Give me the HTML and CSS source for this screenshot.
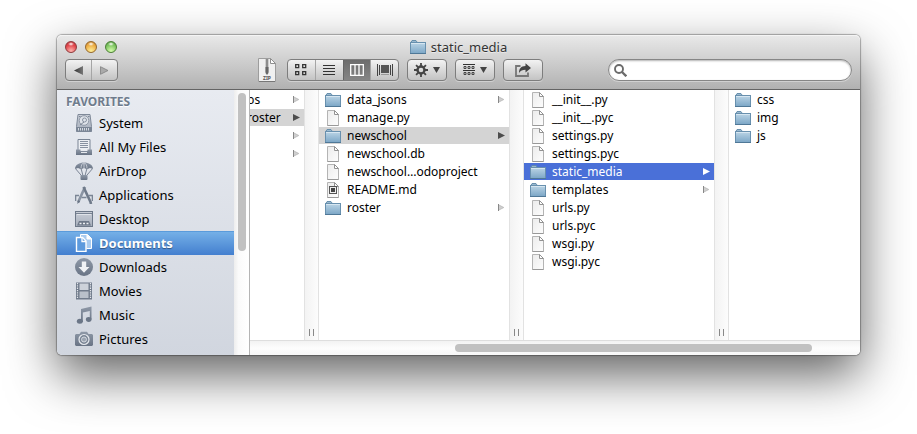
FILE: index.html
```html
<!DOCTYPE html>
<html lang="en">
<head>
<meta charset="utf-8">
<title>static_media</title>
<link rel="stylesheet" href="styles.css">
</head>
<body>
<svg class="sprite" aria-hidden="true">
  <defs>
    <linearGradient id="g-folder" x1="0" y1="0" x2="0" y2="1"><stop offset="0" stop-color="#bcd5e6"/><stop offset="1" stop-color="#7ba6c6"/></linearGradient>
    <linearGradient id="g-page" x1="0" y1="0" x2="1" y2="1"><stop offset="0" stop-color="#ececec"/><stop offset="1" stop-color="#fdfdfd"/></linearGradient>
    <linearGradient id="g-side" x1="0" y1="0" x2="0" y2="1"><stop offset="0" stop-color="#8e98a7"/><stop offset="1" stop-color="#697485"/></linearGradient>
    <linearGradient id="g-pale" x1="0" y1="0" x2="0" y2="1"><stop offset="0" stop-color="#c9ced7"/><stop offset="1" stop-color="#a6aebb"/></linearGradient>
    <linearGradient id="g-back" x1="0" y1="0" x2="1" y2="0"><stop offset="0" stop-color="#333"/><stop offset="1" stop-color="#777"/></linearGradient>
    <symbol id="folder" viewBox="0 0 16 14">
      <path d="M1.5 3V1.2L2 .6h4l.6.6V3" fill="#9fbdd3" stroke="#5f89a8" stroke-width="1"/>
      <rect x=".5" y="2.5" width="15" height="11" fill="url(#g-folder)" stroke="#6890ae"/>
      <path d="M1 3.5h14" stroke="#d6e6f1"/><path d="M0 13.5h16" stroke="#4f7897"/>
    </symbol>
    <symbol id="page" viewBox="0 0 12 16">
      <path d="M.5.5h7l4 4v11H.5z" fill="url(#g-page)" stroke="#b4b4b4"/>
      <path d="M7.5.5v4h4z" fill="#fff" stroke="#929292"/><path d="M.5 15.5h11" stroke="#999"/>
    </symbol>
    <symbol id="page-md" viewBox="0 0 12 16">
      <path d="M.5.5h7l4 4v11H.5z" fill="url(#g-page)" stroke="#b4b4b4"/>
      <path d="M7.5.5v4h4z" fill="#fff" stroke="#929292"/><path d="M.5 15.5h11" stroke="#999"/>
      <rect x="2.5" y="4.5" width="7" height="7" fill="#eee" stroke="#555"/><rect x="4" y="6" width="4" height="4" fill="#444"/>
    </symbol>
    <symbol id="arrow" viewBox="0 0 7 7"><path d="M0 0v7l7-3.500z" fill="currentColor"/></symbol>
    <symbol id="arrow-soft" viewBox="0 0 7 7"><path d="M.5.8v5.400L5.800 3.500z" fill="#d0d0d0" stroke="#b8b8b8" stroke-width=".8"/><path d="M.5 0v7" stroke="#888"/></symbol>

    <symbol id="system" viewBox="0 0 18 18">
      <path d="M3 .5h12l1.500 12v5h-15v-5z" fill="url(#g-pale)" stroke="#7f8998"/>
      <rect x="1.500" y="13" width="15" height="4.500" fill="#7a8595"/>
      <circle cx="9" cy="6.500" r="4.800" fill="#dfe3e9" stroke="#8f98a6"/><circle cx="9.500" cy="6" r="2" fill="none" stroke="#8a94a3"/>
      <path d="M5 11l4-3M4 2.500h1.500M13 2.500h1.500" stroke="#7d8796"/>
      <path d="M3.500 14v2.500M5.500 14v2.500M7.500 14v2.500M9.500 14v2.500M11.500 14v2.500M13.500 14v2.500" stroke="#d4d9e0"/>
    </symbol>
    <symbol id="files" viewBox="0 0 18 18">
      <path d="M3 12.500V1.500h12v11" fill="#eceff3" stroke="#7a8595"/>
      <path d="M5 3.500h8M5 5.500h8M5 7.500h8M5 9.500h8" stroke="#8791a0"/>
      <path d="M1 11.500h4.500v1.500h7v-1.500H17V17H1z" fill="url(#g-side)"/><path d="M6 14.500h6" stroke="#e5e8ed"/>
    </symbol>
    <symbol id="airdrop" viewBox="0 0 18 18">
      <path d="M0 7C0-1.800 18-1.800 18 7L15 6l-3 1.200L9 6 6 7.200 3 6z" fill="url(#g-side)"/>
      <path d="M6 6.500C6 3 7.500.8 9 .8S12 3 12 6.500M9 1v5.500" fill="none" stroke="#c9ced7" stroke-width=".9"/>
      <path d="M.8 7l6 7M6.200 7l1.600 6M11.800 7l-1.600 6M17.200 7l-6 7" stroke="#7b8595" stroke-width="1" fill="none"/>
      <rect x="5.500" y="13" width="7" height="5" rx="1" fill="url(#g-side)"/>
    </symbol>
    <symbol id="apps" viewBox="0 0 18 18">
      <path d="M10 1L3 16.500" stroke="#8a94a3" stroke-width="2.600"/><path d="M3.200 14l-1 4 3-2.500z" fill="#697485"/>
      <path d="M8.500 1l7 15 .5 2" fill="none" stroke="#6f7a8a" stroke-width="2.600"/>
      <path d="M.5 15V9.500H4M6.500 11.500h5M14 9.500h3.500V15" fill="none" stroke="#7a8595" stroke-width="1.600"/>
    </symbol>
    <symbol id="desktop" viewBox="0 0 18 18">
      <rect x=".5" y="1.500" width="17" height="15" fill="url(#g-pale)" stroke="#6e7989"/>
      <path d="M1 3.500h16" stroke="#788393"/><path d="M2 4.500h14" stroke="#dfe3e9"/>
      <path d="M4 11h10l2 4.500H2z" fill="#6e7989"/><path d="M4.500 13.500h2M8 13.500h2M11.500 13.500h2" stroke="#edf0f3" stroke-width="1.500"/>
    </symbol>
    <symbol id="documents" viewBox="0 0 18 18">
      <path d="M5.500 3.500v-3h7l4 4v10h-5" fill="#a9cbef" stroke="#fff"/><path d="M12 .5v4.500h4.500" fill="#fff" stroke="#fff"/>
      <path d="M1.500 3.500h6l3.500 3.500v10.500H1.500z" fill="#5d9add" stroke="#fff" stroke-width="1.400"/><path d="M7 3.500v4h4" fill="none" stroke="#fff" stroke-width="1.300"/>
    </symbol>
    <symbol id="downloads" viewBox="0 0 18 18">
      <circle cx="9" cy="9" r="9" fill="url(#g-side)"/><path d="M6.800 3.500h4.400V9h3.300L9 14.800 3.500 9h3.300z" fill="#f0f2f5"/>
    </symbol>
    <symbol id="movies" viewBox="0 0 18 18">
      <rect x="1" y=".5" width="16" height="17" fill="#707b8b"/><path d="M2.500 1v16M15.500 1v16" stroke="#e5e8ed" stroke-width="1.200" stroke-dasharray="1.300 1"/>
      <rect x="4.500" y="1.500" width="9" height="6.500" fill="#cdd2da"/><rect x="4.500" y="9.500" width="9" height="6.500" fill="#b9c0ca"/>
    </symbol>
    <symbol id="music" viewBox="0 0 18 18">
      <path d="M6 3L16.500.5V13.500H14.800V5L7.800 6.500V16H6z" fill="url(#g-side)"/>
      <ellipse cx="4.800" cy="15.200" rx="3" ry="2.500" fill="#6b7687"/><ellipse cx="13.700" cy="13.500" rx="2.800" ry="2.400" fill="#6b7687"/>
    </symbol>
    <symbol id="pictures" viewBox="0 0 18 18">
      <path d="M1 4h3.500L6 1.800h6L13.500 4H17l1 1v10l-1 1H1l-1-1V5z" fill="url(#g-side)"/>
      <circle cx="9" cy="9.500" r="5" fill="#7a8595" stroke="#e6e9ee" stroke-width="1.200"/><circle cx="9" cy="9.500" r="2.500" fill="#9aa3b0" stroke="#d4d9e0"/>
    </symbol>
  </defs>
</svg>

<main class="window">
  <header class="chrome">
    <div class="titlebar">
      <div class="lights">
        <button class="light light-close" aria-label="Close"></button>
        <button class="light light-min" aria-label="Minimize"></button>
        <button class="light light-zoom" aria-label="Zoom"></button>
      </div>
      <h1 class="title"><svg class="folder-icon"><use href="#folder"/></svg>static_media</h1>
    </div>
    <div class="toolbar">
      <div class="group nav">
        <button class="seg" aria-label="Back"><svg width="9" height="9" viewBox="0 0 9 9"><path d="M9 0v9L0 4.500z" fill="url(#g-back)"/></svg></button>
        <button class="seg" aria-label="Forward"><svg width="9" height="9" viewBox="0 0 9 9"><path d="M.5.7v7.600L8 4.500z" fill="#aaa" stroke="#808080" stroke-width=".8"/></svg></button>
      </div>
      <div class="tools">
        <button class="zip" aria-label="Zip archive">
          <svg width="20" height="24" viewBox="0 0 20 24">
            <path d="M1.500.5h12l5 5v18h-17z" fill="#f0f0f0" stroke="#9d9d9d"/><path d="M13.500.5v5h5z" fill="#fff" stroke="#8e8e8e"/>
            <path d="M2 23.500h16" stroke="#777"/><rect x="8" y="1" width="4" height="13" fill="#cfcfcf"/>
            <path d="M10 1v11" stroke="#777" stroke-width="1.500"/><path d="M8.500 9h3v6L10 17l-1.500-2z" fill="#666"/>
            <text x="10" y="22" class="zip-text">ZIP</text>
          </svg>
        </button>
        <div class="group views">
          <button class="seg" aria-label="Icon view"><svg width="12" height="12" viewBox="0 0 12 12" fill="none" stroke="#333"><path d="M.7.7h3v3h-3zM7.700.7h3v3h-3zM.7 7.700h3v3h-3zM7.700 7.700h3v3h-3z" stroke-width="1.300"/></svg></button>
          <button class="seg" aria-label="List view"><svg width="12" height="12" viewBox="0 0 12 12"><path d="M0 1.500h12M0 4.500h12M0 7.500h12M0 10.500h12" stroke="#333"/></svg></button>
          <button class="seg pressed" aria-label="Column view" aria-pressed="true"><svg width="14" height="12" viewBox="0 0 14 12"><path d="M.7.700h12.600v10.600H.7zM5 1v10M9 1v10" fill="none" stroke="#fff" stroke-width="1.300"/></svg></button>
          <button class="seg" aria-label="Cover flow view"><svg width="16" height="12" viewBox="0 0 16 12"><path d="M.5 0v12M2.500 1v10M13.500 1v10M15.500 0v12" stroke="#444"/><rect x="4" y="1" width="8" height="8" fill="#555"/><path d="M4 10.500h8" stroke="#999"/></svg></button>
        </div>
        <button class="btn" aria-label="Action">
          <svg width="14" height="14" viewBox="0 0 14 14"><circle cx="7" cy="7" r="3.500" fill="none" stroke="#444" stroke-width="2.400"/><path d="M7 0v3M7 11v3M0 7h3M11 7h3M2.050 2.050l2 2M9.950 9.950l2 2M11.950 2.050l-2 2M2.050 11.950l2-2" stroke="#444" stroke-width="1.800"/></svg>
          <svg width="7" height="6" viewBox="0 0 7 6"><path d="M0 0h7L3.500 6z" fill="#444"/></svg>
        </button>
        <button class="btn" aria-label="Arrange">
          <svg width="12" height="12" viewBox="0 0 12 12"><path d="M0 .5h12M0 6.500h12" stroke="#333"/><path d="M1 2.500h2v2H1zM5 2.500h2v2H5zM9 2.500h2v2H9zM1 8.500h2v2H1zM5 8.500h2v2H5zM9 8.500h2v2H9z" fill="none" stroke="#444"/></svg>
          <svg width="7" height="6" viewBox="0 0 7 6"><path d="M0 0h7L3.500 6z" fill="#444"/></svg>
        </button>
        <button class="btn" aria-label="Share">
          <svg width="16" height="14" viewBox="0 0 16 14"><path d="M5.500 3H1v10h12V9.500" fill="none" stroke="#777" stroke-width="1.800"/><path d="M4 10C4 5.500 6 3.200 10.500 3V.3L16 5l-5.500 4.500V6.800C7.500 6.800 5.500 7.500 4 10z" fill="#444"/></svg>
        </button>
      </div>
      <label class="search">
        <svg width="13" height="13" viewBox="0 0 13 13"><circle cx="5" cy="5" r="4" fill="none" stroke="#6b6b6b" stroke-width="1.900"/><path d="M8 8l4.300 4.300" stroke="#6b6b6b" stroke-width="2.300"/></svg>
        <input type="search" aria-label="Search">
      </label>
    </div>
  </header>

  <div class="body">
    <nav class="sidebar">
      <h2 class="heading">FAVORITES</h2>
      <a class="place" href="#"><svg><use href="#system"/></svg>System</a>
      <a class="place" href="#"><svg><use href="#files"/></svg>All My Files</a>
      <a class="place" href="#"><svg><use href="#airdrop"/></svg>AirDrop</a>
      <a class="place" href="#"><svg><use href="#apps"/></svg>Applications</a>
      <a class="place" href="#"><svg><use href="#desktop"/></svg>Desktop</a>
      <a class="place current" href="#"><svg><use href="#documents"/></svg>Documents</a>
      <a class="place" href="#"><svg><use href="#downloads"/></svg>Downloads</a>
      <a class="place" href="#"><svg><use href="#movies"/></svg>Movies</a>
      <a class="place" href="#"><svg><use href="#music"/></svg>Music</a>
      <a class="place" href="#"><svg><use href="#pictures"/></svg>Pictures</a>
    </nav>
    <div class="vtrack"><div class="vthumb"></div></div>
    <div class="browser">
      <div class="columns">
        <div class="column first">
          <a class="row" href="#"><span class="name">bs</span><svg class="arrow"><use href="#arrow-soft"/></svg></a>
          <a class="row opened" href="#"><span class="name">roster</span><svg class="arrow"><use href="#arrow"/></svg></a>
          <a class="row" href="#" aria-label="Folder"><svg class="arrow"><use href="#arrow-soft"/></svg></a>
          <a class="row" href="#" aria-label="Folder"><svg class="arrow"><use href="#arrow-soft"/></svg></a>
        </div>
        <div class="gutter"></div>
        <div class="column">
          <a class="row" href="#"><svg class="folder-icon"><use href="#folder"/></svg><span class="name">data_jsons</span><svg class="arrow"><use href="#arrow-soft"/></svg></a>
          <a class="row" href="#"><svg class="page-icon"><use href="#page"/></svg><span class="name">manage.py</span></a>
          <a class="row opened" href="#"><svg class="folder-icon"><use href="#folder"/></svg><span class="name">newschool</span><svg class="arrow"><use href="#arrow"/></svg></a>
          <a class="row" href="#"><svg class="page-icon"><use href="#page"/></svg><span class="name">newschool.db</span></a>
          <a class="row" href="#"><svg class="page-icon"><use href="#page"/></svg><span class="name">newschool…odoproject</span></a>
          <a class="row" href="#"><svg class="page-icon"><use href="#page-md"/></svg><span class="name">README.md</span></a>
          <a class="row" href="#"><svg class="folder-icon"><use href="#folder"/></svg><span class="name">roster</span><svg class="arrow"><use href="#arrow-soft"/></svg></a>
        </div>
        <div class="gutter"></div>
        <div class="column">
          <a class="row" href="#"><svg class="page-icon"><use href="#page"/></svg><span class="name">__init__.py</span></a>
          <a class="row" href="#"><svg class="page-icon"><use href="#page"/></svg><span class="name">__init__.pyc</span></a>
          <a class="row" href="#"><svg class="page-icon"><use href="#page"/></svg><span class="name">settings.py</span></a>
          <a class="row" href="#"><svg class="page-icon"><use href="#page"/></svg><span class="name">settings.pyc</span></a>
          <a class="row selected" href="#"><svg class="folder-icon"><use href="#folder"/></svg><span class="name">static_media</span><svg class="arrow"><use href="#arrow"/></svg></a>
          <a class="row" href="#"><svg class="folder-icon"><use href="#folder"/></svg><span class="name">templates</span><svg class="arrow"><use href="#arrow-soft"/></svg></a>
          <a class="row" href="#"><svg class="page-icon"><use href="#page"/></svg><span class="name">urls.py</span></a>
          <a class="row" href="#"><svg class="page-icon"><use href="#page"/></svg><span class="name">urls.pyc</span></a>
          <a class="row" href="#"><svg class="page-icon"><use href="#page"/></svg><span class="name">wsgi.py</span></a>
          <a class="row" href="#"><svg class="page-icon"><use href="#page"/></svg><span class="name">wsgi.pyc</span></a>
        </div>
        <div class="gutter"></div>
        <div class="column last">
          <a class="row" href="#"><svg class="folder-icon"><use href="#folder"/></svg><span class="name">css</span></a>
          <a class="row" href="#"><svg class="folder-icon"><use href="#folder"/></svg><span class="name">img</span></a>
          <a class="row" href="#"><svg class="folder-icon"><use href="#folder"/></svg><span class="name">js</span></a>
        </div>
      </div>
      <div class="htrack"><div class="hthumb"></div></div>
    </div>
  </div>
</main>
</body>
</html>
```
FILE: styles.css
```css
*, ::before, ::after { box-sizing: border-box; }

body {
  margin: 0;
  padding: 35px 57px 78px;
  background: #fff;
  color: #000;
  font: 12px "Noto Sans", "Open Sans", sans-serif;
}

a { color: inherit; text-decoration: none; }
button { margin: 0; padding: 0; border: 0; background: none; font: inherit; }
svg { display: block; flex: none; }
.sprite { position: absolute; width: 0; height: 0; }

.window {
  border-radius: 5px;
  box-shadow: 0 0 1px 1px rgba(0, 0, 0, .3), 0 20px 50px rgba(0, 0, 0, .62);
}

/* Title bar and toolbar */
.chrome {
  border-bottom: 1px solid #646464;
  border-radius: 5px 5px 0 0;
  background: linear-gradient(#e9e9e9, #d0d0d0 45%, #b1b1b1);
  box-shadow: inset 0 1px #f4f4f4;
}

.titlebar {
  display: grid;
  grid-template-columns: 1fr auto 1fr;
  align-items: center;
  height: 23px;
  padding: 0 8px;
}

.lights { display: flex; gap: 8px; }
.light {
  width: 12px;
  height: 12px;
  border: 1px solid;
  border-radius: 50%;
}
.light-close {
  border-color: #8e3a3c;
  background: radial-gradient(ellipse 3px 2px at 50% 20%, #fff, transparent), radial-gradient(circle at 50% 90%, #ffb6b0, #e2474c 60%, #b92c35);
}
.light-min {
  border-color: #95682c;
  background: radial-gradient(ellipse 3px 2px at 50% 20%, #fff, transparent), radial-gradient(circle at 50% 90%, #fff09a, #edae45 60%, #c37c26);
}
.light-zoom {
  border-color: #4b7f35;
  background: radial-gradient(ellipse 3px 2px at 50% 20%, #fff, transparent), radial-gradient(circle at 50% 90%, #d8ffae, #7fc662 60%, #4d9539);
}

.title {
  display: flex;
  align-items: center;
  gap: 5px;
  margin: 0;
  color: #333;
  font-size: 13px;
  font-weight: 400;
  line-height: 18px;
  text-shadow: 0 1px rgba(255, 255, 255, .5);
}

.toolbar {
  display: flex;
  align-items: center;
  height: 31px;
  padding: 0 8px 7px;
}

.group, .btn, .search {
  height: 22px;
  border: 1px solid #7d7d7d;
  border-radius: 4px;
  background: linear-gradient(#f3f3f3, #dadada 50%, #c3c3c3);
  box-shadow: 0 1px rgba(255, 255, 255, .35);
}
.group { display: flex; overflow: hidden; }
.seg {
  display: flex;
  flex: 1;
  align-items: center;
  justify-content: center;
  border-left: 1px solid #a5a5a5;
}
.seg:first-child { border-left: 0; }
.seg.pressed {
  border-color: #666;
  background: linear-gradient(#6c6c6c, #858585);
}
.nav { width: 53px; }
.views { width: 112px; }

.tools {
  display: flex;
  align-items: center;
  gap: 8px;
  margin-left: 139px;
}
.btn {
  display: flex;
  align-items: center;
  justify-content: center;
  gap: 5px;
  width: 40px;
}
.zip { margin-right: 2px; }
.zip-text {
  fill: #555;
  font-size: 5px;
  font-weight: 700;
  text-anchor: middle;
}

.search {
  display: flex;
  align-items: center;
  gap: 5px;
  width: 31%;
  margin-left: auto;
  padding: 0 8px 0 5px;
  border-color: #868686;
  border-radius: 11px;
  background: #fff;
  box-shadow: inset 0 1px 2px rgba(0, 0, 0, .3), 0 1px rgba(255, 255, 255, .35);
}
.search input {
  flex: 1;
  min-width: 0;
  padding: 0;
  border: 0;
  outline: 0;
  background: none;
  font: inherit;
}

/* Sidebar */
.body { display: flex; }
.sidebar {
  width: 177px;
  padding-bottom: 4px;
  border-radius: 0 0 0 5px;
  background: linear-gradient(#e8ebf1, #d1d6df);
}
.heading {
  margin: 0;
  padding: 2px 9px 0;
  color: #6f7c8d;
  font-size: 12px;
  font-weight: 700;
  line-height: 19px;
  text-shadow: 0 1px #fff;
}
.place {
  display: flex;
  align-items: center;
  gap: 6px;
  height: 24px;
  padding-left: 18px;
  font-size: 13px;
}
.place svg { width: 18px; height: 18px; }
.place.current {
  background: linear-gradient(#77b2e8, #437fcf);
  box-shadow: inset 0 1px #5a9bdb;
  color: #fff;
  font-weight: 700;
  text-shadow: 0 1px 1px rgba(0, 0, 0, .4);
}

.vtrack {
  width: 16px;
  padding: 3px 4px;
  border-right: 1px solid #b4b4b4;
  background: linear-gradient(90deg, #ededed, #fafafa 30%, #fff);
}
.vthumb {
  width: 8px;
  height: 61%;
  border-radius: 4px;
  background: #c1c1c1;
}

/* Column browser */
.browser {
  display: flex;
  flex: 1;
  flex-direction: column;
  min-width: 0;
  border-radius: 0 0 5px 0;
  background: #fff;
}
.columns { display: flex; flex: 1; }
.column {
  display: flex;
  flex: none;
  flex-direction: column;
  gap: 1px;
  width: 190px;
  padding-top: 1px;
}
.column.first { width: 54px; overflow: hidden; }
.column.last { flex: 1; min-width: 0; }

.row {
  display: flex;
  align-items: center;
  height: 17px;
  padding: 0 4px 0 6px;
  white-space: nowrap;
}
.first .row { padding-left: 0; }
.first .name { margin-left: -3px; }
.folder-icon { width: 16px; height: 14px; }
.row .folder-icon { margin-right: 6px; }
.page-icon { width: 12px; height: 16px; margin: 0 8px 0 2px; }
.arrow { width: 7px; height: 7px; margin-left: auto; color: #4d4d4d; }
.row.opened { background: #d4d4d4; }
.row.selected { background: #4a70d8; color: #fff; }
.row.selected .arrow { color: #fff; }

.gutter {
  display: flex;
  align-items: flex-end;
  justify-content: center;
  width: 15px;
  padding-bottom: 4px;
  border: 1px solid #e2e2e2;
  border-width: 0 1px;
  background: linear-gradient(90deg, #f3f3f3, #fcfcfc);
}
.gutter::after {
  content: "";
  width: 5px;
  height: 7px;
  border: 1px solid #888;
  border-width: 0 1px;
}

.htrack {
  height: 15px;
  padding: 3px 0;
  border-top: 1px solid #dedede;
  border-radius: 0 0 5px 0;
  background: linear-gradient(#f2f2f2, #fdfdfd 50%, #f8f8f8);
}
.hthumb {
  width: 58.6%;
  height: 8px;
  margin-left: 33.6%;
  border-radius: 4px;
  background: #c1c1c1;
}
```
